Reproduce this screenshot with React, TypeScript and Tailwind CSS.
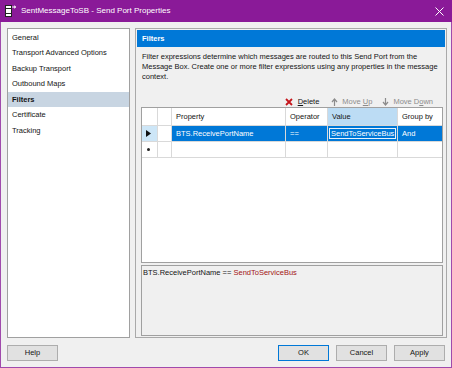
import React from "react";

const navItems = [
  "General",
  "Transport Advanced Options",
  "Backup Transport",
  "Outbound Maps",
  "Filters",
  "Certificate",
  "Tracking",
];

function TitleBar() {
  return (
    <div className="h-[22px] bg-[#8a1a98] flex items-center pl-[4px] pr-[8px] text-white">
      <svg width="13" height="12" viewBox="0 0 13 12" className="mr-[4px]">
        <rect x="1.5" y="0.5" width="6" height="11" fill="#fff" stroke="#222" />
        <line x1="1.5" y1="3.5" x2="7.5" y2="3.5" stroke="#222" />
        <line x1="1.5" y1="8.5" x2="7.5" y2="8.5" stroke="#222" />
        <path d="M8 2 H11.5 M10 0.8 L11.8 2 L10 3.2" stroke="#fff" strokeWidth="1" fill="none" />
      </svg>
      <span className="text-[8px] flex-1">SentMessageToSB - Send Port Properties</span>
      <svg width="9" height="9" viewBox="0 0 9 9">
        <path d="M0.5 0.5 L8.5 8.5 M8.5 0.5 L0.5 8.5" stroke="#fff" strokeWidth="1" />
      </svg>
    </div>
  );
}

function NavList() {
  return (
    <div className="w-[123px] bg-white border border-[#a0a0a0] pt-[0.5px]">
      {navItems.map((item) => (
        <div
          key={item}
          className={
            item === "Filters"
              ? "h-[15.5px] leading-[15.5px] pl-[4px] bg-[#c8d5e2] font-bold"
              : "h-[15.5px] leading-[15.5px] pl-[4px]"
          }
        >
          {item}
        </div>
      ))}
    </div>
  );
}

function Toolbar() {
  return (
    <div className="h-[10px] mt-[15px] flex items-center justify-end pr-[10px] leading-[10px]">
      <span className="flex items-center mr-[12px]">
        <svg width="8" height="8" viewBox="0 0 8 8" className="mr-[5px]">
          <path d="M1 1 L7 7 M7 1 L1 7" stroke="#c4161c" strokeWidth="1.8" />
        </svg>
        <span>
          <span className="underline">D</span>elete
        </span>
      </span>
      <span className="flex items-center mr-[10px] text-[#8c8c8c]">
        <svg width="7" height="8" viewBox="0 0 7 8" className="mr-[4px]">
          <path d="M3.5 8 V1.5 M1 4 L3.5 1 L6 4" stroke="#8c8c8c" strokeWidth="1.2" fill="none" />
        </svg>
        <span>
          Move <span className="underline">U</span>p
        </span>
      </span>
      <span className="flex items-center text-[#8c8c8c]">
        <svg width="7" height="8" viewBox="0 0 7 8" className="mr-[4px]">
          <path d="M3.5 0 V6.5 M1 4 L3.5 7 L6 4" stroke="#8c8c8c" strokeWidth="1.2" fill="none" />
        </svg>
        <span>
          Move D<span className="underline">o</span>wn
        </span>
      </span>
    </div>
  );
}

function Grid() {
  const cell = "border-r border-[#d9d9d9] flex items-center";
  return (
    <div className="h-[156px] bg-white border border-[#a0a0a0] flex flex-col">
      <div className="flex h-[18px] border-b border-[#d9d9d9]">
        <div className={`${cell} w-[16px]`} />
        <div className={`${cell} w-[14px]`} />
        <div className={`${cell} w-[114px] pl-[4px]`}>Property</div>
        <div className={`${cell} w-[42px] pl-[4px]`}>Operator</div>
        <div className={`${cell} w-[70px] pl-[4px] bg-[#bcdcf4]`}>Value</div>
        <div className="w-[44px] pl-[4px] flex items-center">Group by</div>
      </div>
      <div className="flex h-[16px] border-b border-[#d9d9d9]">
        <div className={`${cell} w-[16px] bg-[#cde6f7] pl-[4px]`}>
          <svg width="5" height="7" viewBox="0 0 5 7">
            <path d="M0 0 L5 3.5 L0 7 Z" fill="#111" />
          </svg>
        </div>
        <div className={`${cell} w-[14px]`} />
        <div className={`${cell} w-[114px] pl-[4px] bg-[#0078d7] text-white`}>BTS.ReceivePortName</div>
        <div className={`${cell} w-[42px] pl-[4px] bg-[#0078d7] text-white`}>==</div>
        <div className={`${cell} w-[70px] px-[1px] bg-[#0078d7]`}>
          <div className="w-full h-[11px] border border-[#e8f2fb] bg-[#0078d7] text-white flex items-center pl-[1px] leading-[9px]">
            SendToServiceBus
          </div>
        </div>
        <div className="w-[44px] pl-[4px] flex items-center bg-[#0078d7] text-white">And</div>
      </div>
      <div className="flex h-[16px] border-b border-[#d9d9d9]">
        <div className={`${cell} w-[16px] pl-[5px]`}>
          <span className="w-[3px] h-[3px] rounded-full bg-[#222]" />
        </div>
        <div className={`${cell} w-[14px]`} />
        <div className={`${cell} w-[114px]`} />
        <div className={`${cell} w-[42px]`} />
        <div className={`${cell} w-[70px]`} />
        <div className="w-[44px]" />
      </div>
    </div>
  );
}

function Panel() {
  return (
    <div className="flex-1 border border-[#a9a9a9] p-[1px] flex flex-col">
      <div className="h-[17px] bg-[#0078d7] text-white font-bold flex items-center pl-[5px]">Filters</div>
      <div className="pl-[4px] pr-[2px] flex flex-col flex-1">
        <p className="mt-[5px] pl-[1px] leading-[10px] whitespace-nowrap">
          Filter expressions determine which messages are routed to this Send Port from the
          <br />
          Message Box. Create one or more filter expressions using any properties in the message
          <br />
          context.
        </p>
        <Toolbar />
        <Grid />
        <div className="mt-[2px] h-[71px] bg-[#f0f0f0] border border-[#a0a0a0] pl-[1px] pt-[2px] leading-[10px]">
          BTS.ReceivePortName == <span className="text-[#a31515]">SendToServiceBus</span>
        </div>
      </div>
    </div>
  );
}

function Btn({ label, primary }: { label: string; primary?: boolean }) {
  return (
    <div
      className={
        primary
          ? "w-[51px] h-[16px] bg-[#e1e1e1] border border-[#0078d7] flex items-center justify-center"
          : "w-[51px] h-[16px] bg-[#e1e1e1] border border-[#adadad] flex items-center justify-center"
      }
    >
      {label}
    </div>
  );
}

export default function App() {
  return (
    <div className="w-[452px] h-[368px] flex flex-col font-['Liberation_Sans',Arial,sans-serif] text-[7.5px] text-[#141414]">
      <TitleBar />
      <div className="flex-1 flex flex-col bg-[#f0f0f0] border-x border-b border-[#a04aac] pt-[6px] pl-[6px] pr-[4px]">
        <div className="flex h-[310px] gap-[5px]">
          <NavList />
          <Panel />
        </div>
        <div className="flex mt-[7px] h-[16px] pr-[2px]">
          <Btn label="Help" />
          <div className="flex-1" />
          <div className="flex gap-[7px]">
            <Btn label="OK" primary />
            <Btn label="Cancel" />
            <Btn label="Apply" />
          </div>
        </div>
      </div>
    </div>
  );
}
